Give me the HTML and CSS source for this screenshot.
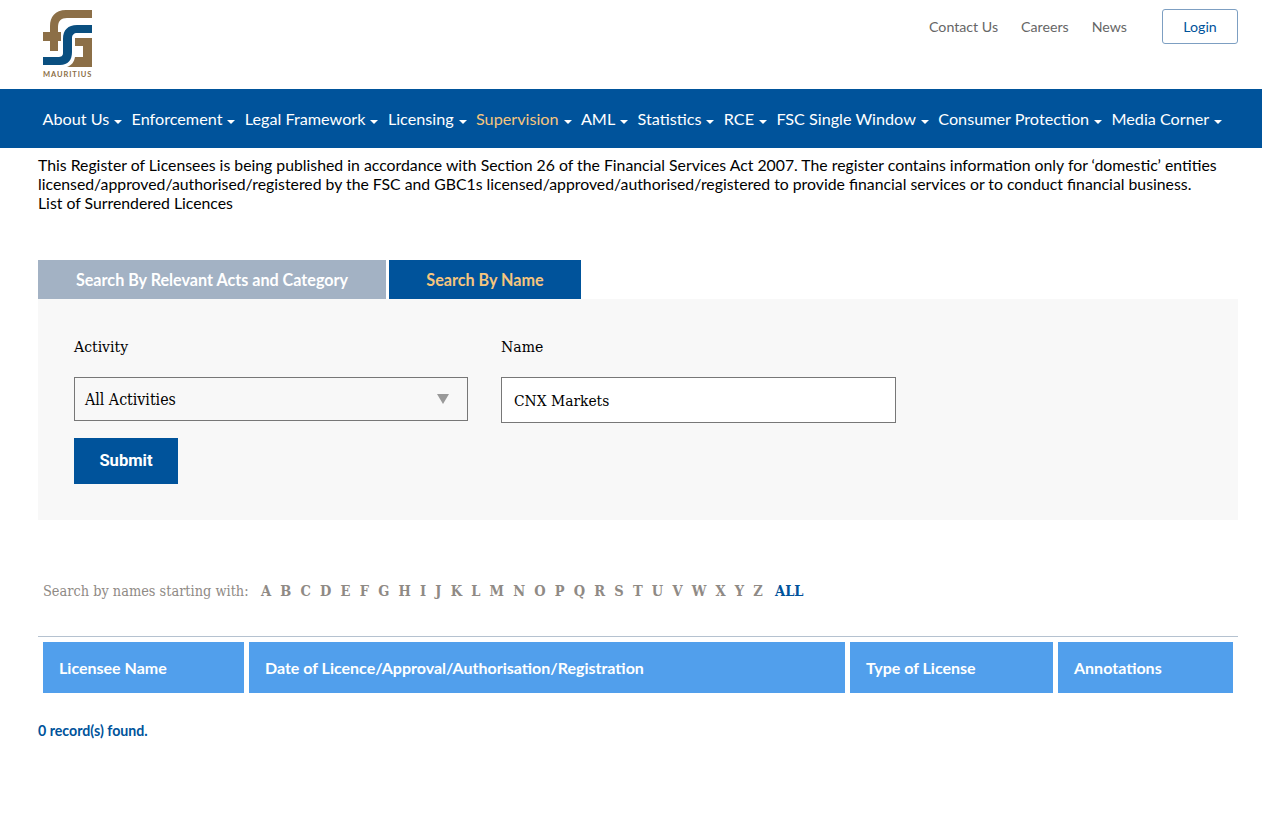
FILE: index.html
```html
<!DOCTYPE html>
<html lang="en">
<head>
<meta charset="utf-8">
<title>Register of Licensees</title>
<link rel="stylesheet" href="styles.css">
</head>
<body>
<header class="top">
  <a class="logo" href="#">
    <svg class="logo-mark" viewBox="0 0 49 58" width="49" height="58" aria-hidden="true">
      <path class="brown" d="M49 0H23C12 0 7 7 7 16V22H0V31H7V41H15V31H18V22H15V17C15 11 18 8 24 8H49Z"/>
      <path class="blue" d="M49 15H34C25 15 20 20 20 29V43C20 46 18 47 15 47H0V55H17C25 55 29 50 29 42V28C29 25 31 23 34 23H49Z"/>
      <path class="brown" d="M32 28H49V57H24C29 55 31 52 32 47H40V36H32Z"/>
    </svg>
    <span class="logo-text">MAURITIUS</span>
  </a>
  <nav class="util">
    <a href="#">Contact Us</a>
    <a href="#">Careers</a>
    <a href="#">News</a>
    <a class="login" href="#">Login</a>
  </nav>
</header>
<nav class="main">
  <a href="#">About Us <i></i></a>
  <a href="#">Enforcement <i></i></a>
  <a href="#">Legal Framework <i></i></a>
  <a href="#">Licensing <i></i></a>
  <a class="on" href="#">Supervision <i></i></a>
  <a href="#">AML <i></i></a>
  <a href="#">Statistics <i></i></a>
  <a href="#">RCE <i></i></a>
  <a href="#">FSC Single Window <i></i></a>
  <a href="#">Consumer Protection <i></i></a>
  <a href="#">Media Corner <i></i></a>
</nav>
<main class="content">
  <p class="intro">This Register of Licensees is being published in accordance with Section 26 of the Financial Services Act 2007. The register contains information only for ‘domestic’ entities licensed/approved/authorised/registered by the FSC and GBC1s licensed/approved/authorised/registered to provide financial services or to conduct financial business.<br>List of Surrendered Licences</p>
  <div class="tabs">
    <a class="tab off" href="#">Search By Relevant Acts and Category</a>
    <a class="tab cur" href="#">Search By Name</a>
  </div>
  <form class="panel">
    <div class="fields">
      <div class="field">
        <label>Activity</label>
        <div class="select"><span>All Activities</span><i></i></div>
      </div>
      <div class="field f2">
        <label>Name</label>
        <div class="input">CNX Markets</div>
      </div>
    </div>
    <button class="submit" type="button">Submit</button>
  </form>
  <div class="alpha">
    <span class="alpha-label">Search by names starting with:</span>
    <span class="letters"><a>A</a><a>B</a><a>C</a><a>D</a><a>E</a><a>F</a><a>G</a><a>H</a><a>I</a><a>J</a><a>K</a><a>L</a><a>M</a><a>N</a><a>O</a><a>P</a><a>Q</a><a>R</a><a>S</a><a>T</a><a>U</a><a>V</a><a>W</a><a>X</a><a>Y</a><a>Z</a><a class="all">ALL</a></span>
  </div>
  <div class="thead">
    <div class="th c1">Licensee Name</div>
    <div class="th c2">Date of Licence/Approval/Authorisation/Registration</div>
    <div class="th c3">Type of License</div>
    <div class="th c4">Annotations</div>
  </div>
  <p class="count">0 record(s) found.</p>
</main>
</body>
</html>
```

FILE: styles.css
```css
* { box-sizing: border-box; }
html, body { margin: 0; padding: 0; }
body { background: #fff; color: #000; font-family: Lato, sans-serif; height: 815px; overflow: hidden; }
a { text-decoration: none; color: inherit; }

.top { height: 89px; display: flex; justify-content: space-between; padding: 10px 24px 0 43px; }
.logo { display: flex; flex-direction: column; align-items: flex-start; width: 50px; }
.logo-mark { display: block; }
.brown { fill: #8c6f47; }
.blue { fill: #0a4f80; }
.logo-text { font-size: 7.5px; font-weight: 700; letter-spacing: 0.9px; color: #8c6f47; line-height: 8px; margin-top: 3px; white-space: nowrap; }

.util { display: flex; align-items: flex-start; font-size: 14.2px; color: #666; margin-top: -1px; }
.util a { line-height: 20px; margin-top: 8px; margin-right: 23px; }
.util a:nth-child(3) { margin-right: 35px; }
.util .login { margin: 0; width: 76px; height: 35px; border: 1px solid #7d9fc2; border-radius: 3px; text-align: center; line-height: 33px; color: #00539b; }

.main { height: 59px; background: #00539b; display: flex; align-items: center; padding: 0 0 0 42.5px; gap: 9.4px; font-size: 16.2px; color: #fff; margin-bottom: 7px; white-space: nowrap; }
.main a { display: flex; align-items: center; gap: 5px; height: 20px; }
.main a.on { color: #f5c57e; }
.main i { display: block; width: 0; height: 0; border: 4.5px solid transparent; border-top: 4.5px solid #fff; border-bottom: 0; margin-top: 6px; }

.content { padding: 0 24px 0 38px; }
.intro { margin: 0; font-size: 15.81px; line-height: 19px; height: 97px; color: #000; }

.tabs { display: flex; gap: 3px; height: 39px; margin-top: 8px; }
.tab { display: flex; align-items: center; justify-content: center; font-size: 16.15px; font-weight: 700; color: #fff; }
.tab.off { width: 348px; background: #a3b2c4; }
.tab.cur { width: 192px; background: #00539b; color: #f5c57e; }

.panel { background: #f8f8f8; height: 221px; padding: 37px 36px 0; }
.fields { display: flex; }
.field { width: 394px; }
.f2 { margin-left: 33px; width: 395px; }
.field label { display: block; font-family: "DejaVu Serif Condensed", "DejaVu Serif", serif; font-stretch: condensed; font-size: 15.6px; line-height: 22px; color: #000; margin-bottom: 19px; }
.select { height: 44px; border: 1px solid #777; display: flex; align-items: center; justify-content: space-between; padding: 0 18px 0 10px; font-family: "DejaVu Serif Condensed", "DejaVu Serif", serif; font-stretch: condensed; font-size: 15.8px; }
.select i { display: block; width: 0; height: 0; border: 6.5px solid transparent; border-top: 10px solid #999; border-bottom: 0; }
.input { height: 46px; border: 1px solid #777; background: #fff; display: flex; align-items: center; padding: 2px 0 0 12px; font-family: "DejaVu Serif Condensed", "DejaVu Serif", serif; font-stretch: condensed; font-size: 15.4px; }
.submit { display: block; width: 104px; height: 46px; margin-top: 15px; background: #00539b; color: #fff; border: 0; padding: 0 0 2px; font-family: Roboto, sans-serif; font-size: 16.6px; font-weight: 700; }

.alpha { display: flex; align-items: center; height: 20px; margin-top: 60px; padding-left: 5px; font-family: "DejaVu Serif Condensed", "DejaVu Serif", serif; font-stretch: condensed; color: #8f8a85; white-space: nowrap; }
.alpha-label { font-size: 14.4px; padding-top: 1px; }
.letters { display: flex; margin-left: 12.5px; font-size: 14.5px; font-weight: 700; gap: 9.18px; }
.letters .all { margin-left: 3px; color: #00539b; }

.thead { display: flex; gap: 5px; margin-top: 36px; border-top: 1px solid #b5c2d0; padding: 5px 5px 0; }
.th { height: 51px; background: #519fec; color: #fff; font-size: 16px; font-weight: 700; display: flex; align-items: center; padding-left: 16px; white-space: nowrap; }
.c1 { width: 201px; }
.c2 { width: 596px; }
.c3 { width: 203px; }
.c4 { width: 175px; }
.count { margin: 28px 0 0; font-size: 14.2px; font-weight: 700; line-height: 20px; color: #00539b; }
```
